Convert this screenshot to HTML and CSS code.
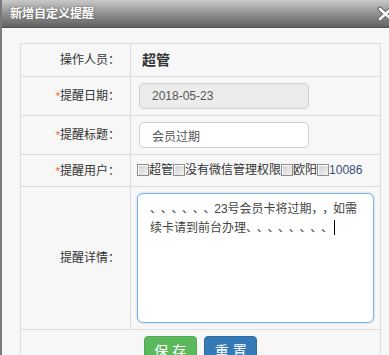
FILE: index.html
```html
<!DOCTYPE html>
<html lang="zh-CN">
<head>
  <meta charset="UTF-8">
  <meta name="viewport" content="width=device-width, initial-scale=1.0">
  <title>新增自定义提醒</title>
  <link rel="stylesheet" href="styles.css">
</head>
<body>
  <div class="dlg">
    <div class="dlg-head">
      <span class="dlg-title">新增自定义提醒</span>
      <span class="dlg-close">
        <svg width="17" height="16" viewBox="0 0 17 16">
          <path d="M3 3 L14 13 M14 3 L3 13" stroke="#6a6a6a" stroke-width="5" stroke-linecap="round"/>
          <path d="M3 3 L14 13 M14 3 L3 13" stroke="#fff" stroke-width="2.6" stroke-linecap="round"/>
        </svg>
      </span>
    </div>
    <div class="dlg-body">
      <table class="form">
        <tr class="r1">
          <td class="lab">操作人员：</td>
          <td class="val"><b class="user">超管</b></td>
        </tr>
        <tr class="r2">
          <td class="lab"><span class="req">*</span>提醒日期：</td>
          <td class="val"><input type="text" class="txt txt-dis" value="2018-05-23" disabled></td>
        </tr>
        <tr class="r2">
          <td class="lab"><span class="req">*</span>提醒标题：</td>
          <td class="val"><input type="text" class="txt" value="会员过期"></td>
        </tr>
        <tr class="r4">
          <td class="lab"><span class="req">*</span>提醒用户：</td>
          <td class="val users">
            <label><input type="checkbox" class="chk">超管</label><label><input type="checkbox" class="chk">没有微信管理权限</label><label><input type="checkbox" class="chk">欧阳</label><label><input type="checkbox" class="chk"><span class="num">10086</span></label>
          </td>
        </tr>
        <tr class="r5">
          <td class="lab">提醒详情：</td>
          <td class="val">
            <div class="area" role="textbox"><span class="pun">、、、、、、</span>23号会员卡将过期<span class="pun">，，</span>如需<br>续卡请到前台办理<span class="pun">、、、、、、、、</span><span class="caret"></span></div>
          </td>
        </tr>
        <tr class="r6">
          <td colspan="2" class="btns">
            <button class="btn btn-save">保存</button>
            <button class="btn btn-reset">重置</button>
          </td>
        </tr>
      </table>
    </div>
  </div>
</body>
</html>
```

FILE: styles.css
```css
html, body {
  margin: 0;
  padding: 0;
  overflow: hidden;
}

body {
  font-family: "Liberation Sans", "Noto Sans CJK SC", sans-serif;
  font-size: 12px;
  color: #333;
  background-color: #f7f7f7;
  text-spacing-trim: space-all;
}

.dlg {
  width: 400px;
  height: 355px;
  border-left: 2px solid #7a7a7a;
  background-color: #f7f7f7;
}

.dlg-head {
  height: 27px;
  display: flex;
  align-items: center;
  justify-content: space-between;
  padding-left: 8px;
  background: linear-gradient(#c9c9c9, #8c8c8c 55%, #626262);
  border-bottom: 1px solid #4e4e4e;
}

.dlg-title {
  color: #fff;
  font-weight: bold;
  font-size: 12px;
  line-height: 16px;
  text-shadow: 0 0 2px #555;
}

.dlg-close {
  display: flex;
  margin-right: 8px;
}

.dlg-body {
  padding: 14px 0 0 18px;
  border-top: 1px solid #fff;
}

.form {
  width: 361px;
  border-collapse: collapse;
  table-layout: fixed;
}

.form td {
  border: 1px solid #dcdcdc;
  padding: 0;
  vertical-align: middle;
}

.lab {
  width: 99px;
  text-align: right;
  padding-right: 10px !important;
  line-height: 16px;
}

.val {
  padding-left: 6px !important;
  line-height: 16px;
}

.r1 td { height: 32px; }
.r2 td { height: 38px; }
.r4 td { height: 31px; }
.r5 td { height: 142px; }
.r6 td { height: 30px; }

.req {
  color: #f35b2b;
  font-size: 11px;
}

.user {
  font-size: 14px;
  margin-left: 5px;
  color: #333;
}

.txt {
  box-sizing: border-box;
  width: 170px;
  height: 26px;
  margin: 0 0 0 2px;
  padding: 0 12px;
  border: 1px solid #cfcfcf;
  border-radius: 5px;
  background-color: #fff;
  font-family: "Liberation Sans", "Noto Sans CJK SC", sans-serif;
  font-size: 12px;
  color: #555;
  display: block;
}

.txt-dis {
  background-color: #ececec;
  color: #555;
}

.users {
  white-space: nowrap;
}

.users label {
  display: inline-flex;
  align-items: center;
}

.chk {
  appearance: none;
  -webkit-appearance: none;
  box-sizing: border-box;
  width: 12px;
  height: 12px;
  margin: 0 0 0 0;
  border: 1px solid #8d8d8d;
  background: linear-gradient(135deg, #cfcfcf, #f2f2f2);
  box-shadow: inset 1px 1px 0 #fff;
}

.num {
  color: #3b4a78;
}

.area {
  box-sizing: border-box;
  width: 237px;
  height: 130px;
  padding: 5px 12px;
  border: 1px solid #7db3e6;
  border-radius: 6px;
  background-color: #fff;
  box-shadow: 0 0 2px rgba(102, 175, 233, 0.6);
  font-size: 12px;
  line-height: 17px;
  color: #444;
  white-space: nowrap;
  text-spacing-trim: space-all;
}

/* 全角标点 */
.pun {
  font-family: "Noto Sans CJK SC", sans-serif;
  letter-spacing: -1.3px;
  text-spacing-trim: space-all;
  font-feature-settings: "chws" 0, "halt" 0;
}

.caret {
  display: inline-block;
  width: 1px;
  height: 15px;
  margin-left: 2px;
  background-color: #000;
  vertical-align: -3px;
}

.btns {
  text-align: center;
  vertical-align: top !important;
  padding-top: 6px !important;
}

.btn {
  width: 53px;
  height: 27px;
  border-radius: 4px;
  color: #fff;
  font-family: "Noto Sans CJK SC", sans-serif;
  font-size: 14px;
  line-height: 20px;
  letter-spacing: 4px;
  padding: 0 0 0 4px;
  cursor: pointer;
  margin: 0 2px;
}

.btn-save {
  background-color: #5cb85c;
  border: 1px solid #4cae4c;
}

.btn-reset {
  background-color: #337ab7;
  border: 1px solid #2e6da4;
}
```
